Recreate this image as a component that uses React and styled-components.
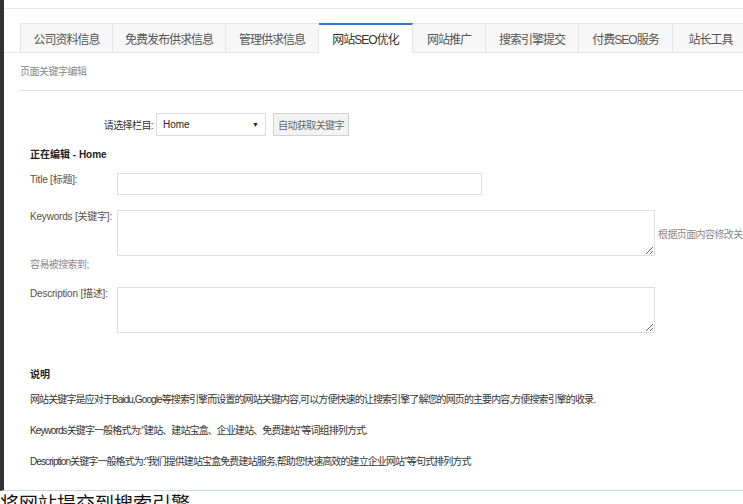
import React from "react";
import styled, { createGlobalStyle } from "styled-components";

const GlobalStyle = createGlobalStyle`
  html, body {
    margin: 0;
    padding: 0;
    background: #fff;
    overflow: hidden;
  }
  body {
    font-family: "Liberation Sans", "Noto Sans CJK SC", sans-serif;
  }
`;

const tabs = [
  { label: "公司资料信息", width: 93 },
  { label: "免费发布供求信息", width: 113 },
  { label: "管理供求信息", width: 93 },
  { label: "网站SEO优化", width: 94, active: true },
  { label: "网站推广", width: 73 },
  { label: "搜索引擎提交", width: 93 },
  { label: "付费SEO服务", width: 94 },
  { label: "站长工具", width: 76 },
];

export default function App() {
  return (
    <>
      <GlobalStyle />
      <Panel>
        <TopRule />
        <TabBar>
          {tabs.map((t) => (
            <Tab key={t.label} $w={t.width} $active={t.active}>
              {t.label}
            </Tab>
          ))}
        </TabBar>

        <Section>
          <SubTitle>页面关键字编辑</SubTitle>
          <Divider />

          <Form>
            <PickRow>
              <PickLabel>请选择栏目:</PickLabel>
              <Select>
                <span>Home</span>
                <Arrow>▼</Arrow>
              </Select>
              <GrayButton>自动获取关键字</GrayButton>
            </PickRow>

            <Editing>正在编辑 - Home</Editing>

            <FieldRow $top={11}>
              <Label>Title [标题]:</Label>
              <Input />
            </FieldRow>

            <FieldRow $top={15}>
              <Label>Keywords [关键字]:</Label>
              <Area />
              <Hint>根据页面内容修改关键字,让您的网站更</Hint>
            </FieldRow>
            <HintTail>容易被搜索到;</HintTail>

            <FieldRow $top={15}>
              <Label>Description [描述]:</Label>
              <Area />
            </FieldRow>

            <NoteTitle>说明</NoteTitle>
            <NoteText $top={11}>
              网站关键字是应对于Baidu,Google等搜索引擎而设置的网站关键内容,可以方便快速的让搜索引擎了解您的网页的主要内容,方便搜索引擎的收录.
            </NoteText>
            <NoteText $top={17}>
              Keywords关键字一般格式为:"建站、建站宝盒、企业建站、免费建站"等词组排列方式.
            </NoteText>
            <NoteText $top={17}>
              Description关键字一般格式为:"我们提供建站宝盒免费建站服务,帮助您快速高效的建立企业网站"等句式排列方式
            </NoteText>
          </Form>
        </Section>
      </Panel>
      <NextHeading>将网站提交到搜索引擎</NextHeading>
    </>
  );
}

const Panel = styled.div`
  width: 830px;
  height: 491px;
  box-sizing: border-box;
  border-left: 4px solid #333;
  border-bottom: 1px solid #cfd7df;
`;

const TopRule = styled.div`
  height: 8px;
  border-bottom: 1px solid #e6e6e6;
`;

const TabBar = styled.div`
  display: flex;
  margin-top: 14px;
  padding-left: 16px;
  border-bottom: 1px solid #e6e6e6;
`;

const Tab = styled.div`
  width: ${(p) => p.$w}px;
  height: ${(p) => (p.$active ? 30 : 29)}px;
  box-sizing: border-box;
  display: flex;
  align-items: center;
  justify-content: center;
  font-size: 12px;
  letter-spacing: -1px;
  color: ${(p) => (p.$active ? "#333" : "#555")};
  background: ${(p) => (p.$active ? "#fff" : "#f7f7f7")};
  border-top: ${(p) => (p.$active ? "2px solid #2d7bd6" : "1px solid #e6e6e6")};
  border-right: 1px solid #e6e6e6;
  margin-bottom: ${(p) => (p.$active ? "-1px" : "0")};
  padding-bottom: ${(p) => (p.$active ? "1px" : "0")};
  position: relative;
  z-index: ${(p) => (p.$active ? 1 : 0)};

  &:first-child {
    border-left: 1px solid #e6e6e6;
  }
`;

const Section = styled.div`
  padding-left: 16px;
`;

const SubTitle = styled.div`
  margin-top: 12px;
  font-size: 10px;
  line-height: 14px;
  color: #888;
  letter-spacing: -0.5px;
`;

const Divider = styled.div`
  margin-top: 11px;
  border-top: 1px solid #e2e2e2;
`;

const Form = styled.div`
  padding-left: 10px;
`;

const PickRow = styled.div`
  display: flex;
  align-items: center;
  margin-top: 22px;
  height: 23px;
`;

const PickLabel = styled.div`
  width: 123px;
  text-align: right;
  font-size: 10px;
  color: #333;
  letter-spacing: -0.6px;
  margin-right: 3px;
`;

const Select = styled.div`
  width: 110px;
  height: 23px;
  box-sizing: border-box;
  border: 1px solid #dcdcdc;
  display: flex;
  align-items: center;
  justify-content: space-between;
  padding: 0 6px 0 6px;
  font-size: 10px;
  color: #222;
  background: #fff;
`;

const Arrow = styled.span`
  font-size: 7px;
  color: #222;
`;

const GrayButton = styled.div`
  margin-left: 7px;
  width: 76px;
  height: 23px;
  box-sizing: border-box;
  border: 1px solid #d2d2d2;
  background: #f3f3f3;
  display: flex;
  align-items: center;
  justify-content: center;
  font-size: 10px;
  letter-spacing: -0.6px;
  color: #666;
`;

const Editing = styled.div`
  margin-top: 12px;
  font-size: 10px;
  line-height: 14px;
  font-weight: bold;
  color: #222;
`;

const FieldRow = styled.div`
  display: flex;
  align-items: flex-start;
  margin-top: ${(p) => p.$top}px;
`;

const Label = styled.div`
  width: 87px;
  flex: none;
  font-size: 10px;
  line-height: 14px;
  color: #5a4f45;
  letter-spacing: -0.2px;
`;

const Input = styled.div`
  width: 365px;
  height: 22px;
  box-sizing: border-box;
  border: 1px solid #e0e0e0;
  background: #fff;
`;

const Area = styled.textarea`
  display: block;
  flex: none;
  width: 538px;
  height: 46px;
  box-sizing: border-box;
  border: 1px solid #e0e0e0;
  margin: 0;
  padding: 2px;
  outline: none;
  font-family: inherit;
`;

const Hint = styled.span`
  align-self: center;
  margin-left: 3px;
  white-space: nowrap;
  font-size: 10px;
  letter-spacing: -0.6px;
  color: #8a8a8a;
`;

const HintTail = styled.div`
  margin-top: 2px;
  font-size: 10px;
  line-height: 14px;
  letter-spacing: -0.6px;
  color: #8a8a8a;
`;

const NoteTitle = styled.div`
  margin-top: 35px;
  font-size: 10px;
  line-height: 14px;
  font-weight: bold;
  color: #222;
`;

const NoteText = styled.div`
  margin-top: ${(p) => p.$top}px;
  font-size: 10px;
  line-height: 14px;
  letter-spacing: -0.9px;
  color: #333;
  white-space: nowrap;
`;

const NextHeading = styled.div`
  font-size: 19px;
  line-height: 26px;
  margin-top: 1px;
  color: #111;
`;
